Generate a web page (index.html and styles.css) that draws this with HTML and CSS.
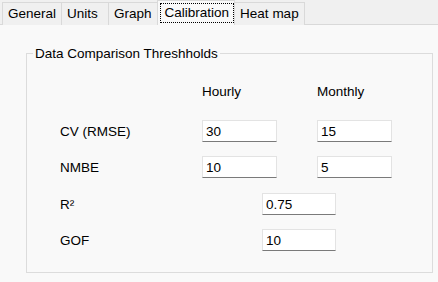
FILE: index.html
```html
<!DOCTYPE html>
<html lang="en">
<head>
    <meta charset="UTF-8">
    <title>Calibration</title>
    <link rel="stylesheet" href="styles.css">
</head>
<body>
    <div class="tabs">
        <div class="tab">General</div>
        <div class="tab">Units</div>
        <div class="tab">Graph</div>
        <div class="tab tab-active"><span class="focus">Calibration</span></div>
        <div class="tab">Heat map</div>
    </div>

    <div class="page">
        <fieldset class="group">
            <legend>Data Comparison Threshholds</legend>
            <div class="grid">
                <span></span>
                <span class="col-head">Hourly</span>
                <span class="col-head">Monthly</span>

                <label class="label">CV (RMSE)</label>
                <input class="field" type="text" value="30">
                <input class="field" type="text" value="15">

                <label class="label">NMBE</label>
                <input class="field" type="text" value="10">
                <input class="field" type="text" value="5">

                <label class="label wide-row">R²</label>
                <input class="field field-wide wide-row" type="text" value="0.75">

                <label class="label">GOF</label>
                <input class="field field-wide" type="text" value="10">
            </div>
        </fieldset>
    </div>
</body>
</html>
```

FILE: styles.css
```css
:root {
    --strip: #f0f0f0;
    --page: #f9f9f9;
    --tab-border: #d9d9d9;
    --group-border: #dcdcdc;
    --text: #000000;
}

* {
    margin: 0;
    padding: 0;
    box-sizing: border-box;
    font-family: "Liberation Sans", Arial, sans-serif;
}

body {
    width: 438px;
    height: 282px;
    background: var(--page);
    color: var(--text);
    font-size: 13.5px;
    overflow: hidden;
}

/* Tab strip */
.tabs {
    display: flex;
    align-items: flex-end;
    height: 25px;
    padding-left: 2px;
    background: var(--strip);
    border-bottom: 1px solid var(--tab-border);
}

.tab {
    height: 23px;
    min-width: 48px;
    padding: 0 5px;
    line-height: 22px;
    margin-bottom: -1px;
    background: var(--strip);
    border: 1px solid var(--tab-border);
    border-bottom: none;
    margin-left: -1px;
    white-space: nowrap;
}

.tab:first-child {
    margin-left: 0;
}

.tab-active {
    height: 25px;
    padding: 2px 0 0 2px;
    background: var(--page);
    position: relative;
    z-index: 1;
    line-height: 18px;
}

.focus {
    display: block;
    padding: 0 4px;
    height: 20px;
    border: 1px dotted #000;
}

/* Tab page */
.page {
    padding: 21px 5px 0 26px;
}

.group {
    height: 227px;
    border: 1px solid var(--group-border);
    padding: 0;
    min-inline-size: 0;
}

.group legend {
    margin-left: 6px;
    padding: 0 2px;
    line-height: 15px;
}

.grid {
    display: grid;
    grid-template-columns: 102px 75px 75px;
    column-gap: 40px;
    row-gap: 14px;
    padding: 23px 0 0 33px;
}

.col-head {
    line-height: 15px;
    margin-bottom: 7px;
}

.label {
    align-self: center;
    line-height: 15px;
}

.field {
    width: 75px;
    height: 22px;
    padding: 0 3px;
    background: #ffffff;
    border: 1px solid #e3e3e3;
    border-bottom-color: #7a7a7a;
    font-size: 13.5px;
    color: var(--text);
    outline: none;
}

.field-wide {
    grid-column: 2 / 4;
    margin-left: 60px;
    width: 74px;
}

.wide-row {
    margin-top: 1px;
}
```
